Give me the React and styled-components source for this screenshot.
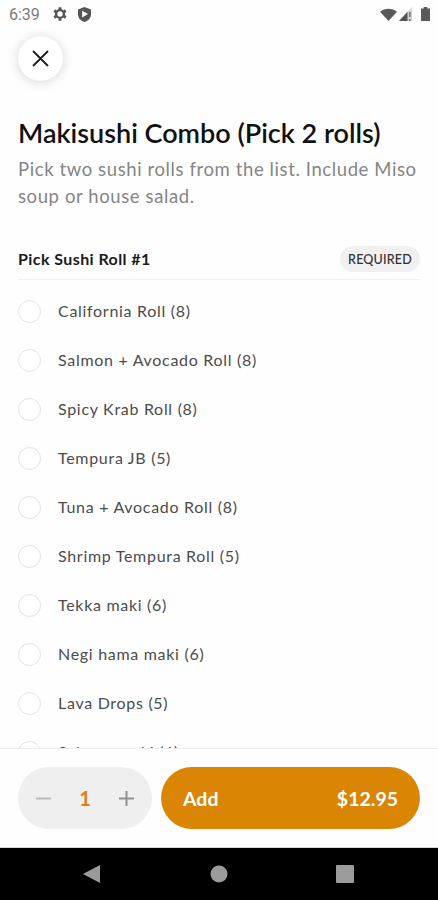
import { useState } from 'react';
import styled, { createGlobalStyle } from 'styled-components';

const GlobalStyle = createGlobalStyle`
  * {
    box-sizing: border-box;
  }
  body {
    margin: 0;
    background: #fefefe;
    font-family: Lato, sans-serif;
  }
  button {
    border: 0;
    padding: 0;
    font-family: inherit;
    cursor: pointer;
  }
`;

const Screen = styled.div`
  display: flex;
  flex-direction: column;
  width: 438px;
  height: 900px;
  overflow: hidden;
  background: #fefefe;
`;

const StatusBar = styled.header`
  display: flex;
  align-items: center;
  flex: none;
  height: 28px;
  padding: 0 8px 0 9px;
  color: #7a7a7a;
`;

const Clock = styled.span`
  width: 44px;
  padding-top: 1px;
  font-family: Roboto, sans-serif;
  font-size: 16px;
  font-weight: 400;
`;

const StatusIcon = styled.svg`
  display: block;
  flex: none;
  width: ${({ $w }) => $w}px;
  height: ${({ $h }) => $h}px;
  margin-left: ${({ $gap }) => $gap || 0}px;
`;

const Spacer = styled.div`
  flex: 1;
`;

const Content = styled.main`
  flex: 1;
  min-height: 0;
  overflow: hidden;
  padding: 8px 18px 0;
`;

const CloseButton = styled.button`
  display: flex;
  align-items: center;
  justify-content: center;
  width: 45px;
  height: 45px;
  border-radius: 50%;
  background: #fff;
  box-shadow: 0 1px 12px rgba(0, 0, 0, 0.17);
`;

const Title = styled.h1`
  margin: 34px 0 0;
  color: #111;
  font-size: 27px;
  font-weight: 600;
  line-height: 36px;
  white-space: nowrap;
`;

const Description = styled.p`
  margin: 5px 0 0;
  color: #858585;
  font-size: 18.5px;
  line-height: 27px;
  letter-spacing: 0.6px;
  white-space: nowrap;
`;

const SectionHeader = styled.div`
  display: flex;
  align-items: center;
  justify-content: space-between;
  height: 41px;
  margin-top: 29px;
  border-bottom: 1px solid #f0f0f0;
`;

const SectionTitle = styled.h2`
  margin: 0;
  padding-bottom: 2px;
  color: #1b1b1b;
  font-size: 16px;
  font-weight: 700;
  letter-spacing: 0.42px;
`;

const Tag = styled.span`
  display: flex;
  align-items: center;
  justify-content: center;
  width: 80px;
  height: 26px;
  border-radius: 13px;
  background: #f0f0f0;
  color: #2e2e2e;
  font-size: 12.5px;
  font-weight: 500;
  letter-spacing: 0.2px;
`;

const Options = styled.div`
  padding-top: 7px;
`;

const Option = styled.label`
  display: flex;
  align-items: center;
  gap: 17px;
  height: 49.05px;
  color: #4c4c4c;
  font-size: 16px;
  letter-spacing: 0.7px;
  white-space: nowrap;
  cursor: pointer;
`;

const OptionName = styled.span`
  padding-bottom: 3px;
`;

const Radio = styled.input`
  appearance: none;
  flex: none;
  width: 23px;
  height: 23px;
  margin: 0;
  border: ${({ checked }) => (checked ? '7px solid #db8504' : '1.5px solid #e2e2e2')};
  border-radius: 50%;
  background: #fff;
`;

const Footer = styled.footer`
  display: flex;
  flex: none;
  gap: 9px;
  height: 100px;
  padding: 18px 18px 0;
  border-top: 1px solid #ededed;
  border-bottom: 1px solid #d8d8d8;
`;

const Stepper = styled.div`
  display: flex;
  align-items: center;
  justify-content: space-between;
  width: 134px;
  height: 62px;
  padding: 0 17px;
  border-radius: 31px;
  background: #efefef;
`;

const StepButton = styled.button`
  display: flex;
  align-items: center;
  justify-content: center;
  width: 16px;
  height: 32px;
  background: transparent;
  color: ${({ $muted }) => ($muted ? '#b8b8b8' : '#929292')};
`;

const Quantity = styled.span`
  color: #d98218;
  font-size: 20px;
  font-weight: 700;
`;

const AddButton = styled.button`
  display: flex;
  align-items: center;
  justify-content: space-between;
  flex: 1;
  height: 62px;
  padding: 0 22px;
  border-radius: 31px;
  background: #db8504;
  color: #fff;
  font-size: 19.5px;
  font-weight: 700;
`;

const NavBar = styled.nav`
  display: flex;
  align-items: center;
  justify-content: space-between;
  flex: none;
  height: 52px;
  padding: 0 84px 0 83px;
  background: #000;
  color: #9b9b9b;
`;

const rolls = [
  'California Roll (8)',
  'Salmon + Avocado Roll (8)',
  'Spicy Krab Roll (8)',
  'Tempura JB (5)',
  'Tuna + Avocado Roll (8)',
  'Shrimp Tempura Roll (5)',
  'Tekka maki (6)',
  'Negi hama maki (6)',
  'Lava Drops (5)',
  'Salmon maki (6)',
];

const PRICE = 12.95;

const App = () => {
  const [selected, setSelected] = useState(null);
  const [quantity, setQuantity] = useState(1);

  return (
    <Screen>
      <GlobalStyle />
      <StatusBar>
        <Clock>6:39</Clock>
        <StatusIcon $w={14} $h={14} viewBox="0 0 14 14" fill="none" stroke="#555">
          <circle cx="7" cy="7" r="3.9" strokeWidth="2.4" />
          <path
            d="M7 .3v2.2M7 11.5v2.2M1.2 3.65l1.9 1.1M10.9 9.25l1.9 1.1M1.2 10.35l1.9-1.1M10.9 4.75l1.9-1.1"
            strokeWidth="3"
          />
        </StatusIcon>
        <StatusIcon $w={13} $h={15} $gap={11} viewBox="0 0 13 15">
          <path d="M6.5 0 13 2.4v4.8c0 3.7-2.5 6.6-6.5 7.8C2.5 13.8 0 10.9 0 7.2V2.4z" fill="#555" />
          <path d="M4.1 3.7 10 7.1l-5.9 3.4z" fill="#fefefe" />
        </StatusIcon>
        <Spacer />
        <StatusIcon $w={17} $h={13} viewBox="0 0 17 14" preserveAspectRatio="none">
          <path d="M0 4C4.8-.4 12.2-.4 17 4L8.5 14z" fill="#5a5a5a" />
        </StatusIcon>
        <StatusIcon $w={13} $h={14} $gap={2} viewBox="0 0 13 14">
          <path d="M13 0v14H0z" fill="#d5d5d5" />
          <path d="M8.5 4.85V14H0z" fill="#555" />
          <path d="M10.8 5v5M10.8 12v2" stroke="#777" strokeWidth="1.6" />
        </StatusIcon>
        <StatusIcon $w={9} $h={14} $gap={9} viewBox="0 0 9 14">
          <path d="M2.7 0h3.6v1.5H9V14H0V1.5h2.7z" fill="#5a5a5a" />
        </StatusIcon>
      </StatusBar>

      <Content>
        <CloseButton aria-label="Close">
          <svg width="17" height="17" viewBox="0 0 17 17" stroke="#1c1c1c" strokeWidth="1.8">
            <path d="M1 1l15 15M16 1L1 16" />
          </svg>
        </CloseButton>
        <Title>Makisushi Combo (Pick 2 rolls)</Title>
        <Description>
          Pick two sushi rolls from the list. Include Miso
          <br />
          soup or house salad.
        </Description>
        <SectionHeader>
          <SectionTitle>Pick Sushi Roll #1</SectionTitle>
          <Tag>REQUIRED</Tag>
        </SectionHeader>
        <Options>
          {rolls.map((roll) => (
            <Option key={roll}>
              <Radio
                type="radio"
                name="roll"
                checked={selected === roll}
                onChange={() => setSelected(roll)}
              />
              <OptionName>{roll}</OptionName>
            </Option>
          ))}
        </Options>
      </Content>

      <Footer>
        <Stepper>
          <StepButton $muted aria-label="Less" onClick={() => setQuantity(Math.max(1, quantity - 1))}>
            <svg width="15" height="15" viewBox="0 0 15 15" stroke="currentColor" strokeWidth="2">
              <path d="M0 7.5h15" />
            </svg>
          </StepButton>
          <Quantity>{quantity}</Quantity>
          <StepButton aria-label="More" onClick={() => setQuantity(quantity + 1)}>
            <svg width="15" height="15" viewBox="0 0 15 15" stroke="currentColor" strokeWidth="2">
              <path d="M0 7.5h15M7.5 0v15" />
            </svg>
          </StepButton>
        </Stepper>
        <AddButton>
          <span>Add</span>
          <span>${(PRICE * quantity).toFixed(2)}</span>
        </AddButton>
      </Footer>

      <NavBar>
        <svg width="18" height="18" viewBox="0 0 18 18" fill="currentColor">
          <path d="M17 0v18L0 9z" />
        </svg>
        <svg width="18" height="18" viewBox="0 0 18 18" fill="currentColor">
          <circle cx="9" cy="9" r="8.5" />
        </svg>
        <svg width="18" height="18" viewBox="0 0 18 18" fill="currentColor">
          <rect width="18" height="18" rx="1" />
        </svg>
      </NavBar>
    </Screen>
  );
};

export default App;
